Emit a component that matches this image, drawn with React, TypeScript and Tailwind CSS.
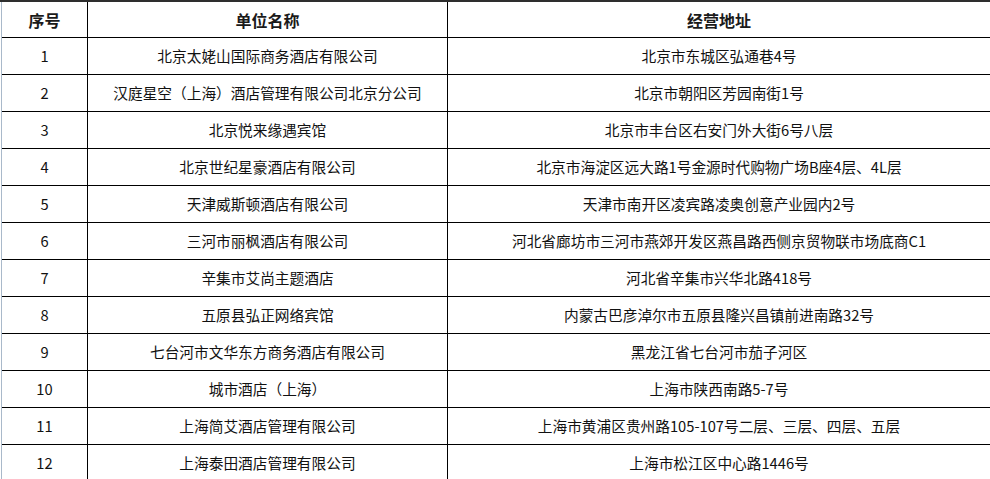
const rows: [string, string, string][] = [
  ["1", "北京太姥山国际商务酒店有限公司", "北京市东城区弘通巷4号"],
  ["2", "汉庭星空（上海）酒店管理有限公司北京分公司", "北京市朝阳区芳园南街1号"],
  ["3", "北京悦来缘遇宾馆", "北京市丰台区右安门外大街6号八层"],
  ["4", "北京世纪星豪酒店有限公司", "北京市海淀区远大路1号金源时代购物广场B座4层、4L层"],
  ["5", "天津威斯顿酒店有限公司", "天津市南开区凌宾路凌奥创意产业园内2号"],
  ["6", "三河市丽枫酒店有限公司", "河北省廊坊市三河市燕郊开发区燕昌路西侧京贸物联市场底商C1"],
  ["7", "辛集市艾尚主题酒店", "河北省辛集市兴华北路418号"],
  ["8", "五原县弘正网络宾馆", "内蒙古巴彦淖尔市五原县隆兴昌镇前进南路32号"],
  ["9", "七台河市文华东方商务酒店有限公司", "黑龙江省七台河市茄子河区"],
  ["10", "城市酒店（上海）", "上海市陕西南路5-7号"],
  ["11", "上海简艾酒店管理有限公司", "上海市黄浦区贵州路105-107号二层、三层、四层、五层"],
  ["12", "上海泰田酒店管理有限公司", "上海市松江区中心路1446号"],
];

const font = { fontFamily: '"Noto Sans CJK SC", "Noto Sans", sans-serif' };

export default function App() {
  return (
    <div className="w-[990px] h-[479px] overflow-hidden bg-white text-[#111]" style={font}>
      <div className="border-t-2 border-[#2e2e2e]">
        <div className="pl-px">
          <div className="border-l border-[#a9b9ca]">
            <div className="grid grid-cols-[86px_360px_1fr] h-[36px] border-b border-black font-bold text-[16px] text-[#1a1a1a]">
              <div className="flex items-center justify-center border-r border-black">序号</div>
              <div className="flex items-center justify-center border-r border-black">单位名称</div>
              <div className="flex items-center justify-center">经营地址</div>
            </div>
            {rows.map(([no, name, addr]) => (
              <div key={no} className="grid grid-cols-[86px_360px_1fr] h-[37px] border-b border-black text-[14.7px]">
                <div className="flex items-center justify-center border-r border-black">{no}</div>
                <div className="flex items-center justify-center border-r border-black whitespace-nowrap">{name}</div>
                <div className="flex items-center justify-center whitespace-nowrap">{addr}</div>
              </div>
            ))}
          </div>
        </div>
      </div>
    </div>
  );
}
